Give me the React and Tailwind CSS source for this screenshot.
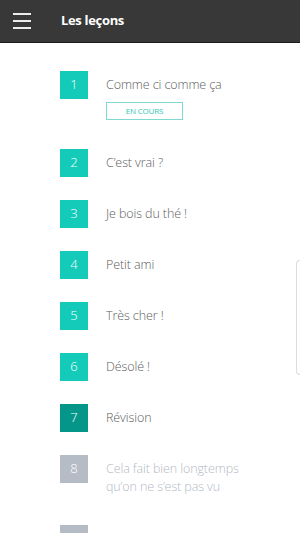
import React from "react";

const lessons = [
  { n: 1, title: "Comme ci comme ça", state: "current" },
  { n: 2, title: "C’est vrai ?", state: "done" },
  { n: 3, title: "Je bois du thé !", state: "done" },
  { n: 4, title: "Petit ami", state: "done" },
  { n: 5, title: "Très cher !", state: "done" },
  { n: 6, title: "Désolé !", state: "done" },
  { n: 7, title: "Révision", state: "review" },
  { n: 8, title: "Cela fait bien longtemps qu’on ne s’est pas vu", state: "locked" },
  { n: 9, title: "", state: "locked", hidden: true },
];

const boxColor = (state) => {
  if (state === "review") return "bg-[#05968a]";
  if (state === "locked") return "bg-[#b6bcc6]";
  return "bg-[#14cbb9]";
};

const LessonRow = ({ lesson }) => {
  const locked = lesson.state === "locked";
  const extra = lesson.n === 1 || lesson.n === 8 ? "mb-[6px]" : "";
  return (
    <div className={`flex flex-row items-start ${extra}`}>
      <div
        className={`w-[28px] h-[28px] shrink-0 flex items-center justify-center text-white text-[13px] font-light ${boxColor(lesson.state)}`}
      >
        {/* last row is cut by the screen edge, its digit isn't visible */}
        {lesson.hidden ? "" : lesson.n}
      </div>
      <div className="ml-[18px] pt-[5px] w-[150px]">
        <div
          className={`text-[12.5px] leading-[18px] font-light tracking-[-0.1px] ${
            locked ? "text-[#b4bac4]" : "text-[#606060]"
          }`}
        >
          {lesson.title}
        </div>
        {lesson.state === "current" && (
          <div className="mt-[8px] w-[77px] h-[18px] border border-[#80d9ce] flex items-center justify-center text-[8px] text-[#2fc6b6] tracking-tight">
            EN COURS
          </div>
        )}
      </div>
    </div>
  );
};

export default function App() {
  return (
    <div
      className="relative w-[300px] h-[533px] overflow-hidden bg-white"
      style={{ fontFamily: '"Open Sans", "Noto Sans", sans-serif' }}
    >
      {/* Header */}
      <div className="h-[43px] bg-[#383838] border-b border-[#1c1c1c] flex flex-row items-center">
        <div className="ml-[13px] w-[18px] flex flex-col gap-[5px]">
          <span className="block h-[2px] bg-[#ececec]" />
          <span className="block h-[2px] bg-[#ececec]" />
          <span className="block h-[2px] bg-[#ececec]" />
        </div>
        <div className="ml-[30px] text-white font-bold text-[13px] tracking-tight">Les leçons</div>
      </div>

      {/* Lessons list */}
      <div className="pl-[60px] pt-[28px] flex flex-col gap-[23px]">
        {lessons.map((l) => (
          <LessonRow key={l.n} lesson={l} />
        ))}
      </div>

      {/* Edge handle */}
      <div className="absolute right-0 top-[260px] w-[4px] h-[115px] border border-r-0 border-[#dcdcdc] rounded-l-[4px]" />
    </div>
  );
}
